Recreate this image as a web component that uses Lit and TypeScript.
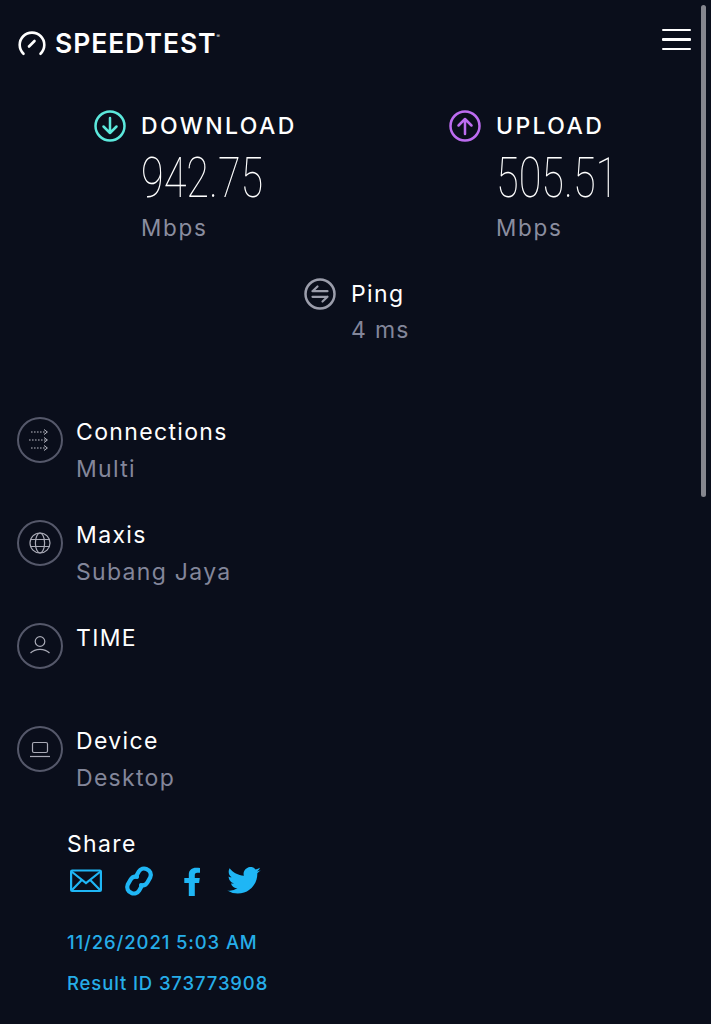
import { LitElement, html, css, svg } from "lit";
import { customElement } from "lit/decorators.js";

const rows = [
  { t: "Connections", s: "Multi", i: svg`<g stroke="#b9bac4" stroke-width="1" fill="none"><path d="M14 15h15M12 23h17M14 31h15" stroke-dasharray="1.600 1.400"/><path d="M27 12.500l3.400 2.500-3.400 2.500M27 20.500l3.400 2.500-3.400 2.500M27 28.500l3.400 2.500-3.400 2.500"/></g>` },
  { t: "Maxis", s: "Subang Jaya", i: svg`<g stroke="#a9aab6" stroke-width="1.200" fill="none"><circle cx="23" cy="23" r="10"/><ellipse cx="23" cy="23" rx="4.600" ry="10"/><path d="M13.600 19.500h18.800M13.600 26.500h18.800"/></g>` },
  { t: "TIME", s: "\u00a0", i: svg`<g stroke="#a9aab6" stroke-width="1.200" fill="none"><circle cx="23" cy="18.500" r="4.800"/><path d="M13.500 30c2.500-2.600 5.700-3.700 9.500-3.700s7 1.100 9.500 3.700"/></g>` },
  { t: "Device", s: "Desktop", i: svg`<g stroke="#a9aab6" stroke-width="1.200" fill="none"><rect x="15.500" y="16.500" width="15" height="10" rx="1.500"/><path d="M13 30.500h20"/></g>` },
];

@customElement("app-root")
export class AppRoot extends LitElement {
  static styles = css`
    :host { display: block; position: relative; width: 711px; height: 1024px; overflow: hidden; background: #0a0e1b; color: #fff; font-family: "Inter", "Noto Sans", sans-serif; }
    .scroll { position: absolute; left: 701px; top: 5px; width: 5px; height: 492px; border-radius: 3px; background: #85868e; }
    header { display: flex; justify-content: space-between; align-items: center; padding: 26px 20px 0 18px; height: 34px; }
    .brand { display: flex; align-items: center; gap: 9px; }
    .brand span { font-size: 26.500px; font-weight: 600; letter-spacing: 0.950px; line-height: 34px; }
    .brand sup { font-size: 5px; align-self: flex-start; margin: 7px 0 0 -9px; }
    .burger { display: flex; flex-direction: column; gap: 7px; width: 29px; margin-top: -7px; }
    .burger i { display: block; height: 2.500px; background: #fff; border-radius: 1px; }
    .metrics { display: grid; grid-template-columns: 355px 1fr; padding: 49px 0 0 94px; }
    .metric { display: grid; grid-template-columns: 31px auto; column-gap: 16px; justify-content: start; }
    .metric svg { width: 32px; height: 32px; margin-top: 1px; }
    .label { font-size: 23px; font-weight: 500; letter-spacing: 2.400px; line-height: 34px; }
    .num { grid-column: 2; font-family: "Roboto", sans-serif; font-weight: 100; font-size: 56px; line-height: 52px; height: 52px; margin-top: 9px; transform: scaleX(0.74); transform-origin: left center; white-space: nowrap; }
    .unit { grid-column: 2; font-size: 22.500px; line-height: 32px; color: #8a8d9f; margin-top: 8px; letter-spacing: 1.700px; }
    .ping { display: grid; grid-template-columns: 32px auto; column-gap: 15px; padding: 34px 0 0 304px; }
    .ping svg { width: 32px; height: 32px; }
    .t { font-size: 23px; line-height: 32px; letter-spacing: 1.350px; white-space: nowrap; }
    .s { font-size: 23px; line-height: 32px; letter-spacing: 1.300px; color: #83869a; margin-top: 5px; white-space: nowrap; }
    .ping .s { grid-column: 2; margin-top: 4px; }
    .list { display: flex; flex-direction: column; gap: 34px; padding: 70px 0 0 17px; }
    .row { display: grid; grid-template-columns: 46px auto; column-gap: 13px; justify-content: start; }
    .row svg { width: 46px; height: 46px; margin-top: 1px; }
    .share { padding: 34px 0 0 67px; }
    .icons { display: flex; align-items: center; margin: 4px 0 0 3px; height: 34px; color: #1fb6f5; }
    .icons svg { display: block; flex: none; }
    .ic-link { margin-left: 21px; }
    .ic-f { margin-left: 29px; }
    .ic-tw { margin-left: 27px; }
    .link { color: #26ade8; font-size: 18.500px; font-weight: 500; letter-spacing: 0.870px; line-height: 24px; }
    .date { margin-top: 32px; }
    .rid { margin-top: 17px; }
  `;

  render() {
    return html`
      <div class="scroll"></div>
      <header>
        <div class="brand">
          <svg width="28" height="25" viewBox="0 0 28 25" fill="none" stroke="#fff" stroke-width="2.600" stroke-linecap="round">
            <path d="M5.500 22.800a12.300 12.300 0 1 1 17 0"/><path d="M11 15.500l5.500-5.500"/>
          </svg>
          <span>SPEEDTEST</span><sup>®</sup>
        </div>
        <div class="burger"><i></i><i></i><i></i></div>
      </header>
      <section class="metrics">
        <div class="metric">
          <svg viewBox="0 0 32 32" fill="none" stroke="#5ce8dc" stroke-width="2.500"><circle cx="16" cy="16" r="14.500"/><path d="M16 8v15M9.500 16.500L16 23l6.500-6.500" stroke-linecap="round" stroke-linejoin="round"/></svg>
          <div class="label">DOWNLOAD</div>
          <div class="num">942.75</div>
          <div class="unit">Mbps</div>
        </div>
        <div class="metric">
          <svg viewBox="0 0 32 32" fill="none" stroke="#bd6cf0" stroke-width="2.500"><circle cx="16" cy="16" r="14.500"/><path d="M16 24V9M9.500 15.500L16 9l6.500 6.500" stroke-linecap="round" stroke-linejoin="round"/></svg>
          <div class="label">UPLOAD</div>
          <div class="num">505.51</div>
          <div class="unit">Mbps</div>
        </div>
      </section>
      <section class="ping">
        <svg viewBox="0 0 32 32" fill="none" stroke="#9b9dab" stroke-width="2.500"><circle cx="16" cy="16" r="14.500"/><path d="M8.500 13.200h15M13.500 8.500l-5 4.700M8.500 18.800h15M18.500 23.500l5-4.700" stroke-width="2.200" stroke-linecap="round"/></svg>
        <div class="t">Ping</div>
        <div class="s">4 ms</div>
      </section>
      <section class="list">
        ${rows.map((r) => html`
          <div class="row">
            <svg viewBox="0 0 46 46"><circle cx="23" cy="23" r="22" fill="none" stroke="#55586a" stroke-width="2"/>${r.i}</svg>
            <div><div class="t">${r.t}</div><div class="s">${r.s}</div></div>
          </div>`)}
      </section>
      <section class="share">
        <div class="t">Share</div>
        <div class="icons">
          <svg width="32" height="24" viewBox="0 0 32 24" fill="none" stroke="currentColor" stroke-width="2.200"><rect x="1.100" y="1.500" width="29.800" height="20.500" rx="1"/><path d="M1.500 2.500L16 14 30.500 2.500M1.500 21.500L12 10.800M30.500 21.500L20 10.800"/></svg>
          <svg class="ic-link" width="32" height="32" viewBox="0 0 32 32" fill="none" stroke="currentColor" stroke-width="4.200" stroke-linecap="round"><path d="M13 11.500l2.800-5a6 6 0 0 1 8-2.300 6 6 0 0 1 3.500 8l-2.800 5a6 6 0 0 1-6.500 3"/><path d="M19 20.500l-2.800 5a6 6 0 0 1-8 2.300 6 6 0 0 1-3.500-8l2.800-5a6 6 0 0 1 6.500-3"/></svg>
          <svg class="ic-f" width="16" height="29" viewBox="0 0 16 29" fill="currentColor"><path d="M10.800 29V16h4.300l.7-5h-5V8.200c0-1.500.4-2.400 2.500-2.400h2.700V1C15 .9 13.500.8 12 .8 8 .8 4.800 3.200 4.800 7.500V11H.3v5h4.500v13z"/></svg>
          <svg class="ic-tw" width="34" height="28" viewBox="0 0 24 20" fill="currentColor"><path d="M24 2.400c-.9.400-1.800.700-2.800.800 1-.6 1.800-1.500 2.200-2.700-.900.600-2 1-3.100 1.200A4.900 4.900 0 0 0 11.900 6.200C7.800 6 4.200 4 1.700.9c-1.300 2.200-.6 5.100 1.500 6.500-.8 0-1.600-.2-2.200-.6 0 2.300 1.600 4.400 3.900 4.900-.7.200-1.500.2-2.200.1.600 2 2.400 3.400 4.600 3.400A9.900 9.900 0 0 1 0 16.800 13.900 13.900 0 0 0 7.500 19c9.100 0 14.300-7.700 14-14.600 1-.7 1.800-1.500 2.500-2z"/></svg>
        </div>
        <div class="link date">11/26/2021 5:03 AM</div>
        <div class="link rid">Result ID 373773908</div>
      </section>
    `;
  }
}
